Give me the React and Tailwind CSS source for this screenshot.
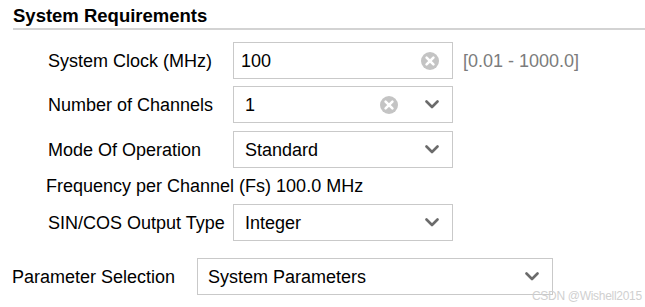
import React from "react";

function ClearIcon() {
  return (
    <svg width="18" height="18" viewBox="0 0 18 18" className="shrink-0">
      <circle cx="9" cy="9" r="9" fill="#c4c4c4" />
      <path d="M5.6 5.6 L12.4 12.4 M12.4 5.6 L5.6 12.4" stroke="#fff" strokeWidth="2.6" strokeLinecap="round" />
    </svg>
  );
}

function Chevron() {
  return (
    <svg width="14" height="9" viewBox="0 0 14 9" className="shrink-0">
      <path d="M1.5 1.5 L7 7 L12.5 1.5" fill="none" stroke="#6b6b6b" strokeWidth="2.6" strokeLinecap="round" strokeLinejoin="round" />
    </svg>
  );
}

function Field({ value, clear, chevron, pad = "pl-[7px]", width = "w-[220px]" }) {
  return (
    <div className={`${width} h-[37px] flex items-center border border-[#c9c9c9] bg-white ${pad} pr-[13px]`}>
      <span className="flex-1">{value}</span>
      {clear && <ClearIcon />}
      {chevron && <span className={clear ? "ml-[27px]" : ""}><Chevron /></span>}
    </div>
  );
}

function Row({ label, children, className = "" }) {
  return (
    <div className={`flex items-center ${className}`}>
      <span className="w-[185px]">{label}</span>
      {children}
    </div>
  );
}

export default function App() {
  return (
    <div className="relative w-[645px] h-[307px] overflow-hidden bg-white text-[18px] leading-none text-black font-['Liberation_Sans',Arial,sans-serif]">
      <div className="pl-[13px] pt-[6px] text-[18.5px] font-bold leading-[20px]">System Requirements</div>
      <div className="ml-[13px] mt-[2px] h-[2px] bg-[#d3d3d3]" />
      <div className="pl-[48px] pt-[12px]">
        <Row label="System Clock (MHz)">
          <Field value="100" clear />
          <span className="ml-[10px] text-[#7c7c7c]">[0.01 - 1000.0]</span>
        </Row>
        <Row label="Number of Channels" className="mt-[7px]">
          <Field value="1" clear chevron pad="pl-[11px]" />
        </Row>
        <Row label="Mode Of Operation" className="mt-[8px]">
          <Field value="Standard" chevron pad="pl-[11px]" />
        </Row>
        <div className="-ml-[2px] h-[36px] flex items-center">Frequency per Channel (Fs) 100.0 MHz</div>
        <Row label="SIN/COS Output Type">
          <Field value="Integer" chevron pad="pl-[11px]" />
        </Row>
      </div>
      <div className="pl-[12px] mt-[17px] flex items-center">
        <span className="w-[185px]">Parameter Selection</span>
        <Field value="System Parameters" chevron pad="pl-[10px]" width="w-[356px]" />
      </div>
      <div className="absolute left-[532px] top-[290px] text-[12px] text-[#d0d0d0] tracking-tight">CSDN @Wishell2015</div>
    </div>
  );
}
